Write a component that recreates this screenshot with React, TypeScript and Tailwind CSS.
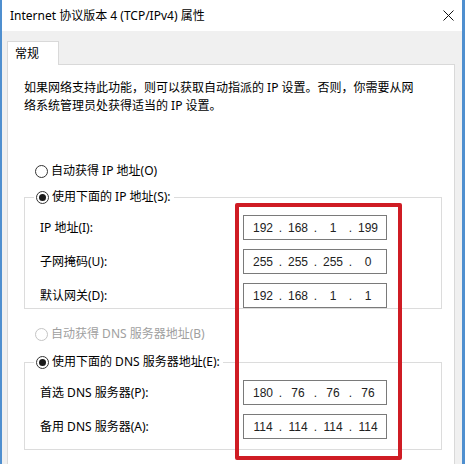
const font = "font-['Noto_Sans','Noto_Sans_CJK_SC',sans-serif]";

const Radio = ({ checked, disabled, label }: { checked?: boolean; disabled?: boolean; label: string }) => (
    <div className="flex items-center h-[18px]">
        <span
            className={`flex items-center justify-center w-[13px] h-[13px] rounded-full border bg-white ${
                disabled ? "border-[#c4c4c4]" : "border-[#333333]"
            }`}>
            {checked ? <span className="w-[7px] h-[7px] rounded-full bg-[#1a1a1a]" /> : null}
        </span>
        <span className={`ml-[3px] text-[12px] leading-[18px] ${disabled ? "text-[#a0a0a0]" : "text-black"}`}>
            {label}
        </span>
    </div>
);

const IpBox = ({ value }: { value: string[] }) => (
    <div className="flex items-center w-[144px] h-[25px] border border-[#7a7a7a] bg-white pl-[6px] font-['Liberation_Sans',Arial,sans-serif] text-[12px] text-[#222]">
        {value.map((v, i) => (
            <div key={i} className="flex items-center">
                <span className="w-[26px] text-center">{v}</span>
                {i < 3 ? <span className="w-[9px] text-center">.</span> : null}
            </div>
        ))}
    </div>
);

const Row = ({ label, value }: { label: string; value: string[] }) => (
    <div className="flex items-center h-[25px]">
        <span className="w-[203px] text-[12px] leading-[18px] text-black">{label}</span>
        <IpBox value={value} />
    </div>
);

const GroupBox = ({ legend, children }: { legend: React.ReactNode; children: React.ReactNode }) => (
    <div className="border border-[#dcdcdc] w-[418px] pl-[15px]">
        <div className="-mt-[10px] -ml-[6px] w-fit bg-white pl-[2px] pr-[3px]">{legend}</div>
        <div className="flex flex-col gap-[9px] mt-[9px]">{children}</div>
    </div>
);

export default function App() {
    return (
        <div className={`relative w-[465px] h-[464px] overflow-hidden bg-[#f0f0f0] border-l-2 border-r-[3px] border-[#4f8fcf] ${font}`}>
            <div className="flex items-center justify-between h-[31px] bg-white pl-[8px] pr-[8px]">
                <span className="text-[12px] text-black">Internet 协议版本 4 (TCP/IPv4) 属性</span>
                <svg width="11" height="11" viewBox="0 0 11 11">
                    <path d="M0.5 0.5 L10.5 10.5 M10.5 0.5 L0.5 10.5" stroke="#111" strokeWidth="1" />
                </svg>
            </div>
            <div className="pt-[10px] pl-[5px]">
                <div className="relative z-10 -mb-px flex items-center w-[52px] h-[24px] bg-white border border-b-0 border-[#d9d9d9] pl-[7px] text-[12px]">
                    常规
                </div>
                <div className="w-[448px] h-[420px] bg-white border border-[#d9d9d9] pt-[14px] pl-[16px]">
                    <p className="text-[12px] leading-[18px] text-black">
                        如果网络支持此功能，则可以获取自动指派的 IP 设置。否则，你需要从网
                        <br />
                        络系统管理员处获得适当的 IP 设置。
                    </p>
                    <div className="mt-[47px] ml-[11px]">
                        <Radio label="自动获得 IP 地址(O)" />
                    </div>
                    <div className="mt-[17px]">
                        <GroupBox legend={<Radio checked label="使用下面的 IP 地址(S):" />}>
                            <Row label="IP 地址(I):" value={["192", "168", "1", "199"]} />
                            <Row label="子网掩码(U):" value={["255", "255", "255", "0"]} />
                            <Row label="默认网关(D):" value={["192", "168", "1", "1"]} />
                        </GroupBox>
                    </div>
                    <div className="mt-[16px] ml-[11px]">
                        <Radio disabled label="自动获得 DNS 服务器地址(B)" />
                    </div>
                    <div className="mt-[19px]">
                        <GroupBox legend={<Radio checked label="使用下面的 DNS 服务器地址(E):" />}>
                            <Row label="首选 DNS 服务器(P):" value={["180", "76", "76", "76"]} />
                            <Row label="备用 DNS 服务器(A):" value={["114", "114", "114", "114"]} />
                            <div className="h-px" />
                        </GroupBox>
                    </div>
                </div>
            </div>
            <div className="absolute left-[233px] top-[203px] w-[167px] h-[257px] border-4 border-[#cf1c24] rounded-[2px]" />
        </div>
    );
}
